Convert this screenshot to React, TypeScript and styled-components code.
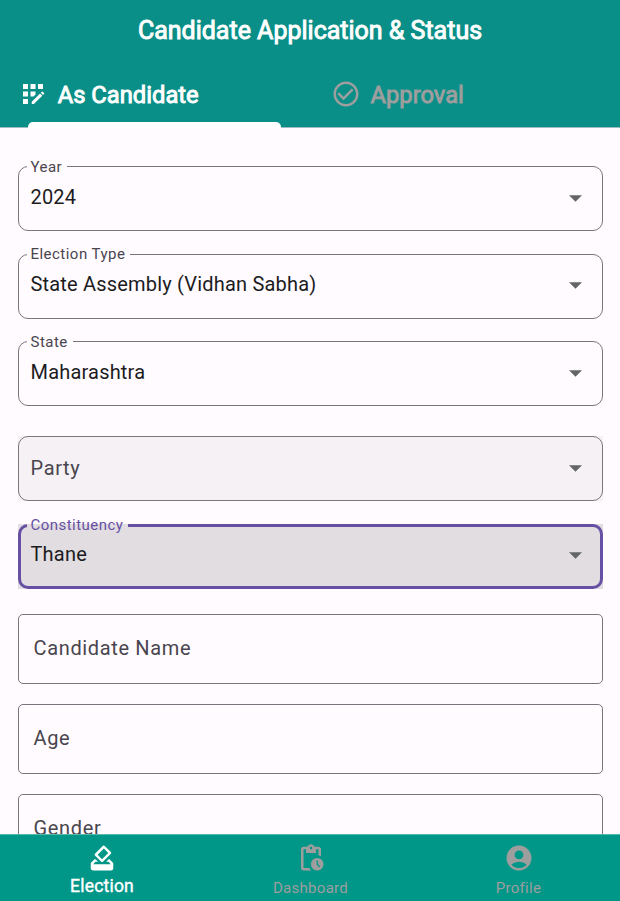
import React from "react";
import styled, { createGlobalStyle, css } from "styled-components";
import {
  MdAccountCircle,
  MdAppRegistration,
  MdCheckCircleOutline,
  MdHowToVote,
  MdPendingActions,
} from "react-icons/md";

const GlobalStyle = createGlobalStyle`
  *, *::before, *::after { box-sizing: border-box; }
  body { margin: 0; background: #fffbff; font-family: Roboto, "Noto Sans", sans-serif; }
`;

const Screen = styled.div`
  width: 620px;
  height: 901px;
  display: flex;
  flex-direction: column;
  overflow: hidden;
  background: #fffbff;
`;

const Header = styled.header`
  flex: none;
  height: 128px;
  background: #0a8f88;
  color: #fff;
  display: flex;
  flex-direction: column;
  border-bottom: 1px solid #9bbcc0;
`;

const Title = styled.h1`
  margin: 0;
  height: 61px;
  text-align: center;
  font-size: 25px;
  font-weight: 400;
  line-height: 61px;
  -webkit-text-stroke: 0.9px currentColor;
`;

const Tabs = styled.nav`
  flex: 1;
  display: grid;
  grid-template-columns: 310px 310px;
`;

const Tab = styled.div<{ $active?: boolean }>`
  display: grid;
  grid-template-rows: 61px 5px;
  color: ${(p) => (p.$active ? "#fff" : "#9e9e9e")};
`;

const TabContent = styled.div<{ $inset: number }>`
  display: flex;
  align-items: center;
  gap: 10px;
  padding: 6px 0 0 ${(p) => p.$inset}px;

  svg {
    margin-bottom: 2px;
  }
`;

const TabLabel = styled.span`
  font-size: 23.75px;
  font-weight: 400;
  line-height: 28px;
  -webkit-text-stroke: 0.9px currentColor;
`;

const Indicator = styled.div`
  margin: 0 29px 0 28px;
  height: 6px;
  background: #fff;
  border-radius: 5px 5px 0 0;
`;

const Form = styled.main`
  flex: 1;
  min-height: 0;
  overflow: hidden;
  padding: 38px 17px 0 18px;
`;

const Field = styled.div<{ $gap: number; $fill?: string }>`
  height: 65px;
  margin-bottom: ${(p) => p.$gap}px;
  background: ${(p) => p.$fill ?? "transparent"};
  display: flex;
  flex-direction: column;
`;

const Outline = styled.fieldset<{ $focused?: boolean; $floating?: boolean }>`
  flex: none;
  min-width: 0;
  margin: ${(p) => (p.$floating ? (p.$focused ? "-8px 0 0" : "-9px 0 0") : "0")};
  height: ${(p) => (p.$floating ? (p.$focused ? "73px" : "74px") : "65px")};
  padding: 0 ${(p) => (p.$focused ? 9 : 11)}px 0 ${(p) => (p.$focused ? 5.5 : 7.5)}px;
  border: ${(p) => (p.$focused ? "3px solid #6750a4" : "1px solid #7a757f")};
  border-radius: 10px;
`;

const Legend = styled.legend<{ $focused?: boolean; $lowered?: boolean }>`
  padding: 0 5px 0 4px;
  height: 18px;
  font-size: 15px;
  line-height: ${(p) => (p.$lowered ? 20 : 18)}px;
  letter-spacing: 0.47px;
  color: ${(p) => (p.$focused ? "#6750a4" : "#49454e")};
`;

const ValueRow = styled.div<{ $placeholder?: boolean; $focused?: boolean; $lowered?: boolean }>`
  display: flex;
  align-items: center;
  justify-content: space-between;
  padding-left: 4px;
  ${(p) =>
    p.$placeholder
      ? css`
          height: 63px;
          color: #49454e;
        `
      : css`
          height: ${p.$focused ? 39 : p.$lowered ? 44 : 42}px;
          color: #1c1b1e;
        `}
`;

const Value = styled.span<{ $placeholder?: boolean }>`
  font-size: 20px;
  line-height: 30px;
  margin-top: ${(p) => (p.$placeholder ? -2 : 0)}px;
  letter-spacing: ${(p) => (p.$placeholder ? 0.65 : 0.19)}px;
`;

const Arrow = styled.svg<{ $placeholder?: boolean }>`
  width: 13px;
  height: 7px;
  margin: ${(p) => (p.$placeholder ? "0" : "3px")} 9px 0 0;
  fill: #656466;
`;

const TextField = styled.div`
  height: 70px;
  margin-bottom: 20px;
  padding: 0 0 2px 14.5px;
  border: 1px solid #7a757f;
  border-radius: 5px;
  display: flex;
  align-items: center;
  font-size: 20px;
  letter-spacing: 0.65px;
  color: #49454e;
`;

const TextFields = styled.div`
  display: flex;
  flex-direction: column;
`;

const BottomBar = styled.nav`
  flex: none;
  height: 67px;
  border-top: 1px solid #55b8ac;
  background: #009688;
  display: grid;
  grid-template-columns: 204px 213px 203px;
`;

const NavItem = styled.div<{ $active?: boolean }>`
  display: flex;
  flex-direction: column;
  align-items: center;
  padding-top: 8px;
  color: ${(p) => (p.$active ? "#fff" : "#9e9e9e")};
`;

const NavLabel = styled.span<{ $active?: boolean }>`
  ${(p) =>
    p.$active
      ? css`
          font-size: 17.5px;
          font-weight: 400;
          line-height: 21px;
          letter-spacing: 0.2px;
          margin-top: 3px;
          -webkit-text-stroke: 0.4px currentColor;
        `
      : css`
          font-size: 15px;
          line-height: 18px;
          letter-spacing: 0.3px;
          margin-top: 6px;
        `}
`;

type SelectProps = {
  label: string;
  value?: string;
  focused?: boolean;
  lowered?: boolean;
  fill?: string;
  gap: number;
};

function SelectField({ label, value, focused, lowered, fill, gap }: SelectProps) {
  const empty = value === undefined;
  return (
    <Field $gap={gap} $fill={fill}>
      <Outline $focused={focused} $floating={!empty}>
        {!empty && (
          <Legend $focused={focused} $lowered={lowered}>
            {label}
          </Legend>
        )}
        <ValueRow $placeholder={empty} $focused={focused} $lowered={lowered}>
          <Value $placeholder={empty}>{value ?? label}</Value>
          <Arrow viewBox="0 0 13 7" $placeholder={empty}>
            <path d="M0 .3h13L6.5 6.8z" />
          </Arrow>
        </ValueRow>
      </Outline>
    </Field>
  );
}

export default function App() {
  return (
    <>
      <GlobalStyle />
      <Screen>
        <Header>
          <Title>Candidate Application &amp; Status</Title>
          <Tabs>
            <Tab $active>
              <TabContent $inset={17.7}>
                <MdAppRegistration size={30} />
                <TabLabel>As Candidate</TabLabel>
              </TabContent>
              <Indicator />
            </Tab>
            <Tab>
              <TabContent $inset={20.5}>
                <MdCheckCircleOutline size={30} />
                <TabLabel>Approval</TabLabel>
              </TabContent>
            </Tab>
          </Tabs>
        </Header>
        <Form>
          <SelectField label="Year" value="2024" lowered gap={23} />
          <SelectField label="Election Type" value="State Assembly (Vidhan Sabha)" gap={22} />
          <SelectField label="State" value="Maharashtra" lowered gap={30} />
          <SelectField label="Party" fill="#f5f1f4" gap={23} />
          <SelectField label="Constituency" value="Thane" focused fill="#e1dde0" gap={25} />
          <TextFields>
            <TextField>Candidate Name</TextField>
            <TextField>Age</TextField>
            <TextField>Gender</TextField>
          </TextFields>
        </Form>
        <BottomBar>
          <NavItem $active>
            <MdHowToVote size={30} />
            <NavLabel $active>Election</NavLabel>
          </NavItem>
          <NavItem>
            <MdPendingActions size={30} />
            <NavLabel>Dashboard</NavLabel>
          </NavItem>
          <NavItem>
            <MdAccountCircle size={30} />
            <NavLabel>Profile</NavLabel>
          </NavItem>
        </BottomBar>
      </Screen>
    </>
  );
}
